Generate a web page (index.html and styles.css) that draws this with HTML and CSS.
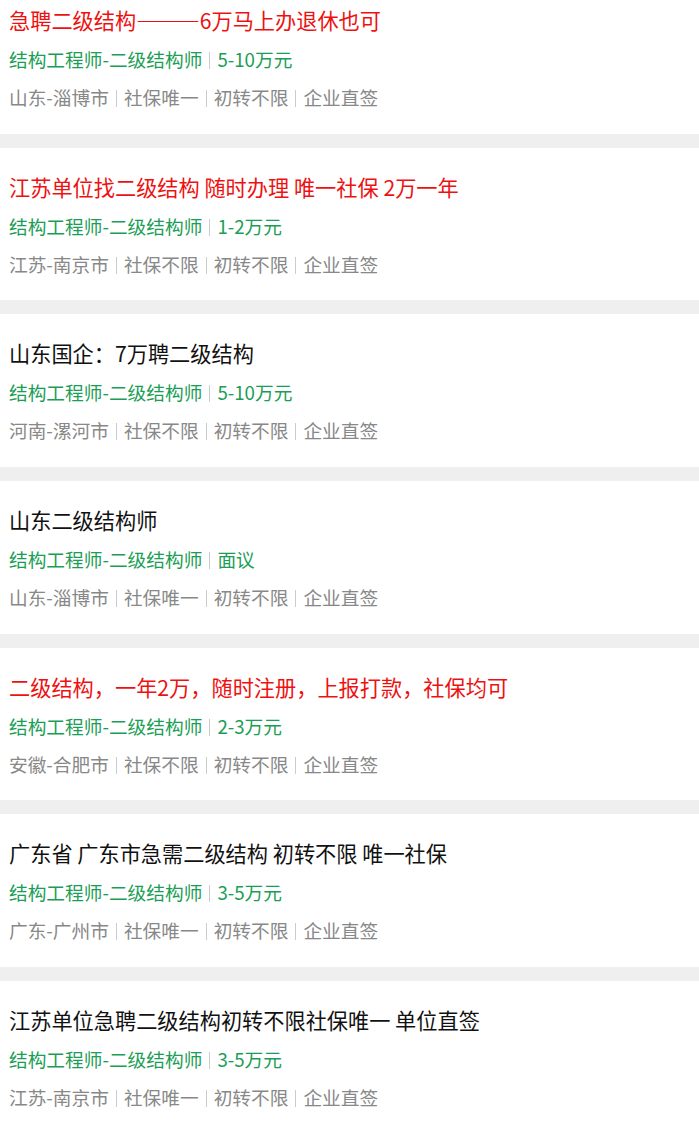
FILE: index.html
```html
<!DOCTYPE html>
<html lang="zh-CN">
<head>
    <meta charset="UTF-8">
    <meta name="viewport" content="width=device-width, initial-scale=1.0">
    <title>二级结构师招聘</title>
    <link rel="stylesheet" href="styles.css">
</head>
<body>
    <ul class="job-list">
        <li class="job">
            <div class="job-title hot">急聘二级结构———6万马上办退休也可</div>
            <div class="job-info"><span>结构工程师-二级结构师</span><span>5-10万元</span></div>
            <div class="job-tags"><span>山东-淄博市</span><span>社保唯一</span><span>初转不限</span><span>企业直签</span></div>
        </li>
        <li class="job">
            <div class="job-title hot">江苏单位找二级结构 随时办理 唯一社保 2万一年</div>
            <div class="job-info"><span>结构工程师-二级结构师</span><span>1-2万元</span></div>
            <div class="job-tags"><span>江苏-南京市</span><span>社保不限</span><span>初转不限</span><span>企业直签</span></div>
        </li>
        <li class="job">
            <div class="job-title">山东国企：7万聘二级结构</div>
            <div class="job-info"><span>结构工程师-二级结构师</span><span>5-10万元</span></div>
            <div class="job-tags"><span>河南-漯河市</span><span>社保不限</span><span>初转不限</span><span>企业直签</span></div>
        </li>
        <li class="job">
            <div class="job-title">山东二级结构师</div>
            <div class="job-info"><span>结构工程师-二级结构师</span><span>面议</span></div>
            <div class="job-tags"><span>山东-淄博市</span><span>社保唯一</span><span>初转不限</span><span>企业直签</span></div>
        </li>
        <li class="job">
            <div class="job-title hot">二级结构，一年2万，随时注册，上报打款，社保均可</div>
            <div class="job-info"><span>结构工程师-二级结构师</span><span>2-3万元</span></div>
            <div class="job-tags"><span>安徽-合肥市</span><span>社保不限</span><span>初转不限</span><span>企业直签</span></div>
        </li>
        <li class="job">
            <div class="job-title">广东省 广东市急需二级结构 初转不限 唯一社保</div>
            <div class="job-info"><span>结构工程师-二级结构师</span><span>3-5万元</span></div>
            <div class="job-tags"><span>广东-广州市</span><span>社保唯一</span><span>初转不限</span><span>企业直签</span></div>
        </li>
        <li class="job">
            <div class="job-title">江苏单位急聘二级结构初转不限社保唯一 单位直签</div>
            <div class="job-info"><span>结构工程师-二级结构师</span><span>3-5万元</span></div>
            <div class="job-tags"><span>江苏-南京市</span><span>社保唯一</span><span>初转不限</span><span>企业直签</span></div>
        </li>
    </ul>
</body>
</html>
```

FILE: styles.css
```css
body {
    margin: 0;
    background-color: #fff;
    font-family: "Noto Sans CJK SC", "Noto Sans", sans-serif;
}
.job-list {
    list-style: none;
    margin: 0;
    padding: 0;
}
.job {
    padding: 20px 9px 17.7px;
    border-bottom: 14px solid #efefef;
    white-space: nowrap;
    overflow: hidden;
}
.job:first-child {
    padding-top: 1px;
}
.job-title {
    font-size: 21.2px;
    line-height: 38px;
    margin-bottom: 1px;
    color: #111;
}
.job-title.hot {
    color: #ee1111;
}
.job-info, .job-tags {
    font-size: 18.7px;
    line-height: 38px;
    display: flex;
    align-items: center;
}
.job-info {
    color: #1a9e55;
}
.job-tags {
    color: #888;
}
.job-info span + span::before,
.job-tags span + span::before {
    content: "";
    display: inline-block;
    width: 1px;
    height: 17px;
    margin: 0 7px;
    background-color: #ccc;
    vertical-align: -2px;
}
```
